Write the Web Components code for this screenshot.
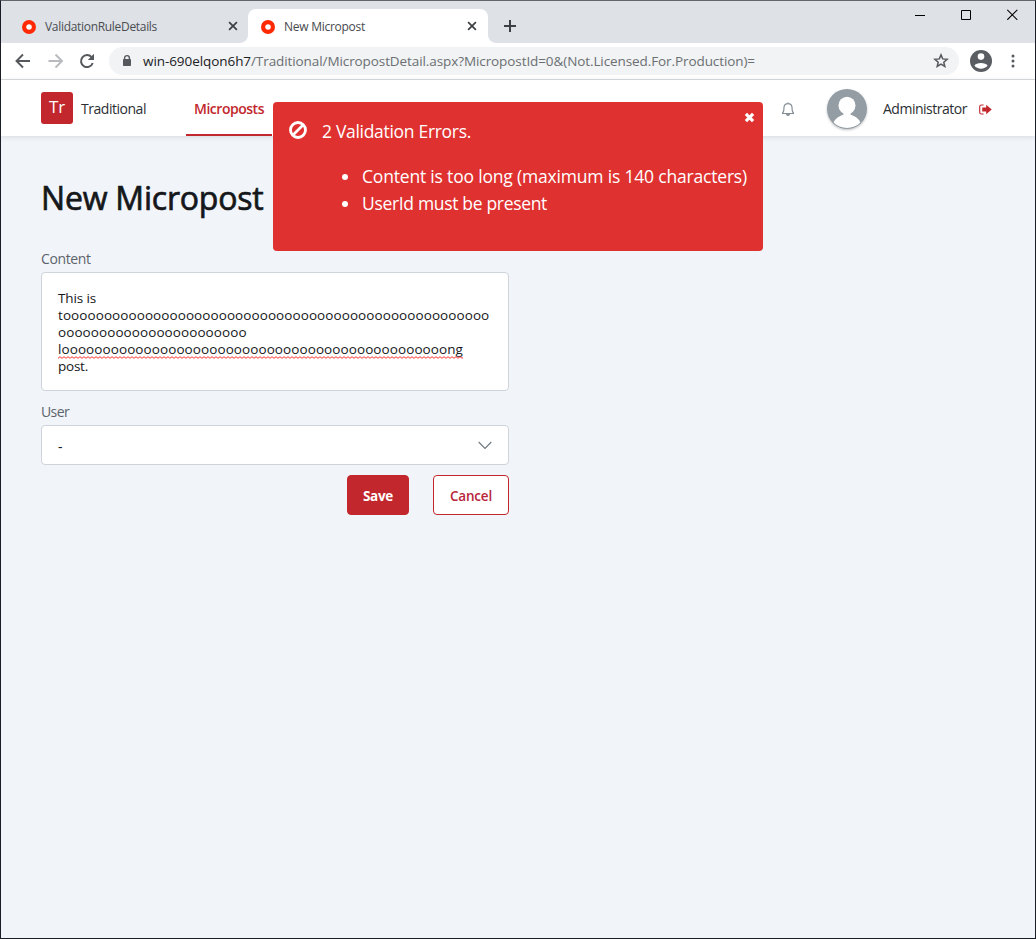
<!DOCTYPE html>
<html lang="en">
<head>
<meta charset="utf-8">
<title>New Micropost</title>
<style>
html,body{margin:0;height:100%}
body{font-family:"Open Sans","Noto Sans",sans-serif;font-size:14px;color:#15171a;overflow:hidden}
</style>
</head>
<body>
<app-window></app-window>
<script>
const define = (name, html, ready) => customElements.define(name, class extends HTMLElement {
  constructor() {
    super();
    this.attachShadow({ mode: 'open' }).innerHTML = html;
  }
  connectedCallback() { if (ready) ready.call(this, this.shadowRoot); }
});

/* One line of text, tracked so that it fills the width given in pixels. */
define('fit-text', `<style>
:host{display:block;white-space:pre;flex:none}
span{display:inline-block}
</style><span><slot></slot></span>`, function (root) {
  const want = parseFloat(this.getAttribute('w'));
  this.style.width = want + 'px';
  const span = root.querySelector('span');
  const n = this.textContent.length;
  const have = span.getBoundingClientRect().width;
  span.style.letterSpacing = ((want - have) / n).toFixed(4) + 'px';
});

define('tab-favicon', `<style>:host{display:block;width:14px;height:14px}svg{display:block}</style>
<svg width="14" height="14"><circle cx="7" cy="7" r="4.900" fill="#fff" stroke="#ff2a05" stroke-width="4.200"/></svg>`);

define('browser-tab', `<style>
:host{display:flex;align-items:center;position:relative;box-sizing:border-box;height:34px;padding:1px 11px 0 13px;width:240px;font-size:12px;color:#4a4d52;border-radius:8px 8px 0 0}
:host([active]){background:#fff;color:#45494d}
:host([active])::before,:host([active])::after{content:"";position:absolute;bottom:0;width:8px;height:8px}
:host([active])::before{left:-8px;background:radial-gradient(circle at 0 0,transparent 7.5px,#fff 8.2px)}
:host([active])::after{right:-8px;background:radial-gradient(circle at 100% 0,transparent 7.5px,#fff 8.2px)}
slot{display:block;margin-left:9px;flex:1;line-height:16px}
.x{width:10px;height:10px;margin-top:-1px}
</style><tab-favicon></tab-favicon><slot></slot>
<svg class="x" viewBox="0 0 10 10"><path d="M1.100 1.100l7.800 7.800M8.900 1.100L1.100 8.900" stroke="#3c4043" stroke-width="1.700"/></svg>`);

define('window-controls', `<style>:host{display:flex;gap:36px;margin:8px 17px 0 auto;align-self:flex-start}svg{display:block}</style>
<svg width="10" height="11"><path d="M0 6.500h10" stroke="#000"/></svg>
<svg width="10" height="11"><path d="M.5 1.500h9v9h-9z" fill="none" stroke="#000"/></svg>
<svg width="11" height="11"><path d="M.3 .8l10 10M10.300 .8l-10 10" stroke="#000" stroke-width="1.100"/></svg>`);

define('tab-strip', `<style>
:host{display:flex;align-items:flex-end;height:42px;background:#dee1e6}
.plus{align-self:center;margin:8px 0 0 15px;display:block}
</style>
<browser-tab style="width:247px;padding-left:21px;padding-right:10px"><fit-text w="112">ValidationRuleDetails</fit-text></browser-tab>
<browser-tab active><fit-text w="81">New Micropost</fit-text></browser-tab>
<svg class="plus" width="14" height="14"><path d="M7 1v12M1 7h12" stroke="#3c4043" stroke-width="2"/></svg>
<window-controls></window-controls>`);

define('address-bar', `<style>
:host{display:flex;align-items:center;box-sizing:border-box;height:37px;background:#fff;border-bottom:1px solid #d9dbde;padding:0 15px 0 14px}
svg{display:block;flex:none}
.pill{display:flex;align-items:center;flex:1;height:28px;border-radius:14px;background:#f1f3f4;margin:0 11px 0 14px;padding:0 10px 0 13px;font-size:13.500px;line-height:20px;color:#6b6f73}
.host{color:#202124}
.star{margin-left:auto}
</style>
<svg width="16" height="16" viewBox="0 0 16 16"><path d="M15 8H2M8 1.500L1.500 8 8 14.500" fill="none" stroke="#55585c" stroke-width="1.900"/></svg>
<svg style="margin-left:17px" width="16" height="16" viewBox="0 0 16 16"><path d="M.5 8h13.500M7.500 1.500L14 8l-6.500 6.500" fill="none" stroke="#b8babd" stroke-width="1.900"/></svg>
<svg style="margin-left:15px" width="16" height="16" viewBox="0 0 16 16"><path d="M13.700 10A6 6 0 1 1 12.600 4.200" fill="none" stroke="#55585c" stroke-width="2"/><path d="M15 .8v6.200H8.800z" fill="#55585c"/></svg>
<div class="pill">
<svg width="10" height="14" viewBox="0 0 10 14"><path d="M2.600 6V4a2.400 2.400 0 0 1 4.800 0v2" fill="none" stroke="#55585c" stroke-width="1.400"/><rect x="1" y="5" width="8" height="7" rx=".8" fill="#55585c"/></svg>
<fit-text class="host" style="margin-left:11px" w="108">win-690elqon6h7</fit-text><fit-text w="504">/Traditional/MicropostDetail.aspx?MicropostId=0&amp;(Not.Licensed.For.Production)=</fit-text>
<svg class="star" width="16" height="16" viewBox="0 0 16 16"><path d="M8 1.900l1.700 4 4.400.4-3.300 2.900 1 4.300L8 11.200l-3.800 2.300 1-4.300L1.900 6.300l4.400-.4z" fill="none" stroke="#55585c" stroke-width="1.500"/></svg>
</div>
<svg width="22" height="22" viewBox="0 0 22 22"><circle cx="11" cy="11" r="11" fill="#5a5d61"/><circle cx="11" cy="6.600" r="3.300" fill="#fff"/><path d="M4.400 15.600c1.500-3.500 11.700-3.500 13.200 0-2.800 4.200-10.400 4.200-13.200 0z" fill="#fff"/></svg>
<svg style="margin:0 5px 0 19px" width="4" height="14"><circle cx="2" cy="2" r="1.500" fill="#55585c"/><circle cx="2" cy="7" r="1.500" fill="#55585c"/><circle cx="2" cy="12" r="1.500" fill="#55585c"/></svg>`);

define('site-header', `<style>
:host{display:flex;align-items:stretch;position:relative;height:56px;background:#fff;box-shadow:0 1px 5px rgba(40,50,60,.14);padding:0 43px 0 40px;line-height:20px;color:#2b2f33}
:host>*{flex:none}
.logo{align-self:center;width:32px;height:32px;border-radius:3px;background:#c2272d;color:#fff;font-size:17px;display:flex;justify-content:center;line-height:30px}
.t{padding-top:19px}
.nav{box-sizing:border-box;width:86px;margin-left:40px;padding:19px 8px 0;border-bottom:2px solid #c2272d;color:#c2272d;font-weight:600}
.right{display:flex;align-items:center;margin-left:auto}
svg{display:block}
</style>
<div class="logo"><fit-text w="16">Tr</fit-text></div>
<fit-text class="t" style="margin-left:8px" w="65">Traditional</fit-text>
<div class="nav"><fit-text w="70">Microposts</fit-text></div>
<div class="right">
<svg style="margin-top:2px" width="14" height="15" viewBox="0 0 14 15"><path d="M7 .5v1.200M1 11.500h12M1.300 11.300C3.600 9.400 2.600 7.500 3 5.200 3.300 3 5 1.700 7 1.700S10.700 3 11 5.200c.4 2.300-.6 4.200 1.700 6.100" fill="none" stroke="#868e96" stroke-width="1.200"/><path d="M5 12.100h4a2 2 0 0 1-4 0z" fill="#868e96"/></svg>
<svg style="margin:4px 0 0 28px" width="48" height="48" viewBox="0 0 48 48"><defs><clipPath id="c"><circle cx="24" cy="23" r="19"/></clipPath><filter id="s" x="-20%" y="-20%" width="140%" height="140%"><feDropShadow dx="0" dy="1" stdDeviation="1.300" flood-opacity=".25"/></filter></defs><circle cx="24" cy="23" r="20" fill="#949da4" filter="url(#s)"/><g clip-path="url(#c)" fill="#fff"><ellipse cx="24" cy="19.500" rx="8.500" ry="8.700"/><path d="M20.500 26h7v5h-7z"/><path d="M9.500 43C9.500 33 15 30.800 21 28.500h6c6 2.300 11.500 4.500 11.500 14.500z"/></g></svg>
<fit-text style="margin:1px 0 0 12px" w="84">Administrator</fit-text>
<svg style="margin:2px 0 0 12px" width="13" height="11" viewBox="0 0 13 11"><path d="M4.600 1H2.500Q.7 1 .7 2.800v5.400Q.7 10 2.500 10h2.100" fill="none" stroke="#c2272d" stroke-width="1.100"/><path d="M3.200 3.600h4V.8l5.500 4.700-5.500 4.700V7.400h-4z" fill="#c2272d"/></svg>
</div>`);

define('field-box', `<style>
:host{display:block}
.label{color:#5c636b;line-height:20px;height:23px}
.box{box-sizing:border-box;background:#fff;border:1px solid #ced4da;border-radius:4px;padding:17px 16px 15px}
</style><div class="label"><slot name="label"></slot></div><div class="box"><slot></slot></div>`);

define('spell-mark', `<style>
:host{display:block;position:relative;width:405px}
svg{position:absolute;left:0;top:15px}
</style><slot></slot><svg width="405" height="3"><defs><pattern id="w" width="4" height="3" patternUnits="userSpaceOnUse"><path d="M-1 1.500L0 2.300 2 .7 4 2.300 5 1.500" fill="none" stroke="#f33" stroke-width="1"/></pattern></defs><rect width="405" height="3" fill="url(#w)"/></svg>`);

define('push-button', `<style>
:host{display:flex;box-sizing:border-box;justify-content:center;height:40px;border:1px solid #c2272d;border-radius:4px;background:#fff;color:#b8243b;line-height:40px;font-size:13.500px;font-weight:600}
:host([primary]){background:#c2272d;color:#fff;font-weight:700}
</style><slot></slot>`);

define('micropost-form', `<style>
:host{display:block;width:468px;padding:0 0 0 40px}
h1{margin:0;padding-top:39px;height:74px;font-size:32px;line-height:46px;font-weight:400;color:#15171a;-webkit-text-stroke:.7px #15171a}
.area{line-height:17px;height:85px;font-size:13.500px}
.sel{display:flex;align-items:center;height:6px}
.sel svg{margin:-2px 0 0 auto}
.row{display:flex;justify-content:flex-end;gap:24px;margin-top:10px}
</style>
<h1><fit-text w="222.500">New Micropost</fit-text></h1>
<field-box><fit-text slot="label" w="49.500">Content</fit-text>
<div class="area"><fit-text w="38">This is</fit-text><fit-text w="431.300" id="a"></fit-text><fit-text w="188.600" id="b"></fit-text><spell-mark><fit-text w="405" id="c"></fit-text></spell-mark><fit-text w="30">post.</fit-text></div></field-box>
<field-box style="margin-top:11px"><fit-text slot="label" w="28">User</fit-text>
<div class="sel"><span>-</span><svg width="14" height="9" viewBox="0 0 14 9"><path d="M.7 1l6.300 6.500L13.300 1" fill="none" stroke="#6c757d" stroke-width="1.100"/></svg></div></field-box>
<div class="row"><push-button primary style="width:62px"><fit-text w="30">Save</fit-text></push-button><push-button style="width:76px"><fit-text w="42">Cancel</fit-text></push-button></div>`, function (root) {
  const fill = (id, s) => {
    const el = root.getElementById(id);
    el.textContent = s;
    el.connectedCallback();
  };
  fill('a', 't' + 'o'.repeat(52));
  fill('b', 'o'.repeat(23));
  fill('c', 'l' + 'o'.repeat(47) + 'ng');
});

define('error-toast', `<style>
:host{display:block;position:absolute;left:273px;top:102px;width:490px;height:149px;box-sizing:border-box;border-radius:4px;background:#df3130;color:#fff;font-size:17.500px;line-height:27px;padding:16px 16px 0 49px}
.ban{position:absolute;left:16px;top:19px}
.x{position:absolute;right:8px;top:10px}
ul{margin:18px 0 0;padding:0 0 0 40px;list-style:none}
li{position:relative}
li::before{content:"";position:absolute;left:-20px;top:11px;width:6px;height:6px;border-radius:50%;background:#fff}
</style>
<svg class="ban" width="18" height="18"><circle cx="9" cy="9" r="7.500" fill="none" stroke="#fff" stroke-width="2.800"/><path d="M4 14L14 4" stroke="#fff" stroke-width="2.600"/></svg>
<svg class="x" width="11" height="11"><path d="M1.900 1.900l7.200 7.200M9.100 1.900L1.900 9.100" stroke="#fff" stroke-width="3.200"/></svg>
<fit-text w="149">2 Validation Errors.</fit-text>
<ul><li><fit-text w="385">Content is too long (maximum is 140 characters)</fit-text></li><li><fit-text w="185">UserId must be present</fit-text></li></ul>`);

define('app-window', `<style>
:host{display:flex;flex-direction:column;box-sizing:border-box;width:1036px;height:939px;border:1px solid #1a1d26;border-top-color:#63656a;background:#f1f5f9;position:relative}
</style><tab-strip></tab-strip><address-bar></address-bar><site-header></site-header><micropost-form></micropost-form><error-toast style="margin:-1px 0 0 -1px"></error-toast>`);
</script>
</body>
</html>
